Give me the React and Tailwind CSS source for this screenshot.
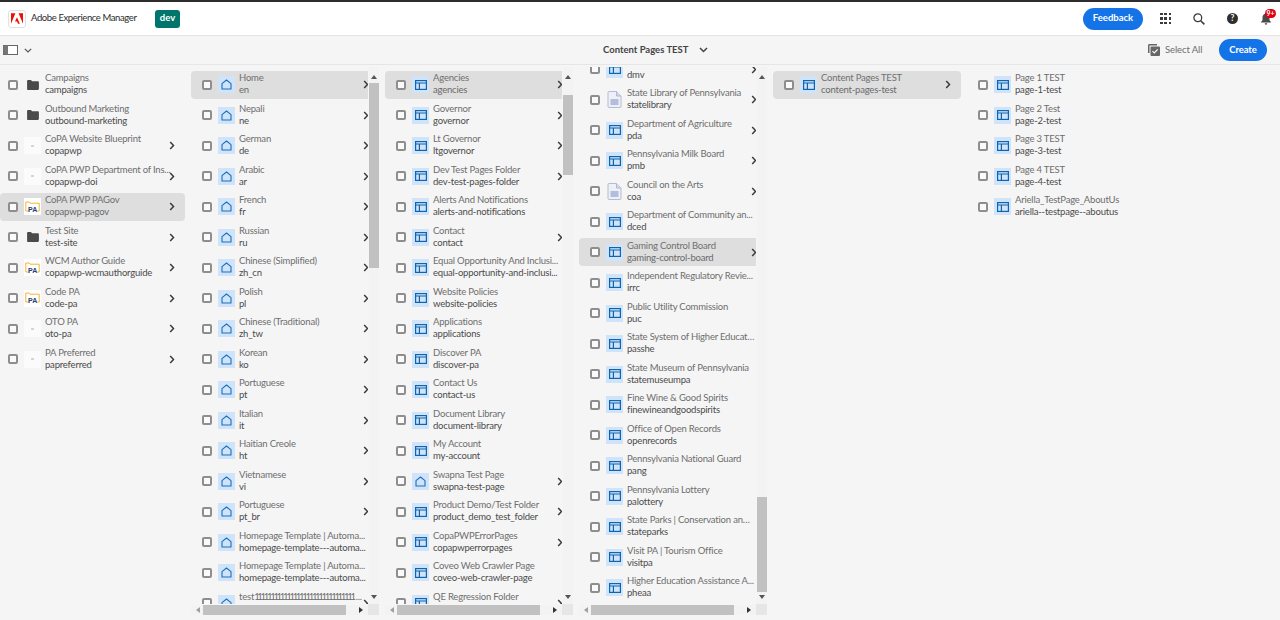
const col1 = [
  { t: 'Campaigns', s: 'campaigns', i: 'folder' },
  { t: 'Outbound Marketing', s: 'outbound-marketing', i: 'folder' },
  { t: 'CoPA Website Blueprint', s: 'copapwp', i: 'thumb', c: true },
  { t: 'CoPA PWP Department of Ins...', s: 'copapwp-doi', i: 'thumb', c: true },
  { t: 'CoPA PWP PAGov', s: 'copapwp-pagov', i: 'pa', c: true, sel: true },
  { t: 'Test Site', s: 'test-site', i: 'folder', c: true },
  { t: 'WCM Author Guide', s: 'copapwp-wcmauthorguide', i: 'pa', c: true },
  { t: 'Code PA', s: 'code-pa', i: 'pa', c: true },
  { t: 'OTO PA', s: 'oto-pa', i: 'thumb', c: true },
  { t: 'PA Preferred', s: 'papreferred', i: 'thumb', c: true },
]

const col2 = [
  { t: 'Home', s: 'en', sel: true },
  { t: 'Nepali', s: 'ne' },
  { t: 'German', s: 'de' },
  { t: 'Arabic', s: 'ar' },
  { t: 'French', s: 'fr' },
  { t: 'Russian', s: 'ru' },
  { t: 'Chinese (Simplified)', s: 'zh_cn' },
  { t: 'Polish', s: 'pl' },
  { t: 'Chinese (Traditional)', s: 'zh_tw' },
  { t: 'Korean', s: 'ko' },
  { t: 'Portuguese', s: 'pt' },
  { t: 'Italian', s: 'it' },
  { t: 'Haitian Creole', s: 'ht' },
  { t: 'Vietnamese', s: 'vi' },
  { t: 'Portuguese', s: 'pt_br' },
  { t: 'Homepage Template | Automa...', s: 'homepage-template---automa...', noC: true },
  { t: 'Homepage Template | Automa...', s: 'homepage-template---automa...', noC: true },
  { t: <>test<span className="tracking-[-2.3px]">1111111111111111111111111111111</span><span className="ml-[2px]">...</span></>, s: 'test' },
].map(r => ({ i: 'home', c: !r.noC, ...r }))

const col3 = [
  { t: 'Agencies', s: 'agencies', c: true, sel: true },
  { t: 'Governor', s: 'governor', c: true },
  { t: 'Lt Governor', s: 'ltgovernor', c: true },
  { t: 'Dev Test Pages Folder', s: 'dev-test-pages-folder', c: true },
  { t: 'Alerts And Notifications', s: 'alerts-and-notifications' },
  { t: 'Contact', s: 'contact', c: true },
  { t: 'Equal Opportunity And Inclusi...', s: 'equal-opportunity-and-inclusi...' },
  { t: 'Website Policies', s: 'website-policies' },
  { t: 'Applications', s: 'applications' },
  { t: 'Discover PA', s: 'discover-pa' },
  { t: 'Contact Us', s: 'contact-us' },
  { t: 'Document Library', s: 'document-library' },
  { t: 'My Account', s: 'my-account' },
  { t: 'Swapna Test Page', s: 'swapna-test-page', c: true, i: 'home' },
  { t: 'Product Demo/Test Folder', s: 'product_demo_test_folder', c: true },
  { t: 'CopaPWPErrorPages', s: 'copapwperrorpages', c: true },
  { t: 'Coveo Web Crawler Page', s: 'coveo-web-crawler-page' },
  { t: 'QE Regression Folder', s: 'qe-regression-folder', c: true },
].map(r => ({ i: 'page', ...r }))

const col4 = [
  { t: 'DMV', s: 'dmv', c: true },
  { t: 'State Library of Pennsylvania', s: 'statelibrary', c: true, i: 'file' },
  { t: 'Department of Agriculture', s: 'pda', c: true },
  { t: 'Pennsylvania Milk Board', s: 'pmb', c: true },
  { t: 'Council on the Arts', s: 'coa', c: true, i: 'file' },
  { t: 'Department of Community an...', s: 'dced' },
  { t: 'Gaming Control Board', s: 'gaming-control-board', c: true, sel: true },
  { t: 'Independent Regulatory Revie...', s: 'irrc' },
  { t: 'Public Utility Commission', s: 'puc' },
  { t: 'State System of Higher Educati...', s: 'passhe' },
  { t: 'State Museum of Pennsylvania', s: 'statemuseumpa' },
  { t: 'Fine Wine & Good Spirits', s: 'finewineandgoodspirits' },
  { t: 'Office of Open Records', s: 'openrecords' },
  { t: 'Pennsylvania National Guard', s: 'pang' },
  { t: 'Pennsylvania Lottery', s: 'palottery' },
  { t: 'State Parks | Conservation and ...', s: 'stateparks' },
  { t: 'Visit PA | Tourism Office', s: 'visitpa' },
  { t: 'Higher Education Assistance A...', s: 'pheaa' },
].map(r => ({ i: 'page', ...r }))

const col5 = [{ t: 'Content Pages TEST', s: 'content-pages-test', i: 'page', c: true, sel: true }]

const col6 = [
  { t: 'Page 1 TEST', s: 'page-1-test' },
  { t: 'Page 2 Test', s: 'page-2-test' },
  { t: 'Page 3 TEST', s: 'page-3-test' },
  { t: 'Page 4 TEST', s: 'page-4-test' },
  { t: 'Ariella_TestPage_AboutUs', s: 'ariella--testpage--aboutus' },
].map(r => ({ i: 'page', ...r }))

const RowIcon = ({ type }) => {
  if (type === 'folder') {
    return (
      <div className="w-[17px] h-[17px] shrink-0 flex items-center justify-center">
        <svg width="12" height="10" viewBox="0 0 13 11">
          <path d="M0 1.2C0 .5.5 0 1.2 0h3l1.3 1.5h6.3c.7 0 1.2.5 1.2 1.2v7c0 .7-.5 1.2-1.2 1.2H1.2C.5 11 0 10.5 0 9.8z" fill="#4a4a4a" />
        </svg>
      </div>
    )
  }
  if (type === 'thumb') {
    return (
      <div className="w-[17px] h-[17px] shrink-0 bg-[#fbfbfb] flex items-center justify-center">
        <div className="w-[3px] h-[2px] bg-[#d4d4d4]" />
      </div>
    )
  }
  if (type === 'pa') {
    return (
      <div className="w-[17px] h-[17px] shrink-0 bg-white flex items-center justify-center">
        <svg width="15" height="12" viewBox="0 0 15 12">
          <path d="M4.500 10H.8V1h3.200l1 1.200h9.200V10h-1.800" fill="none" stroke="#f5b335" strokeWidth="1" />
          <text x="7.700" y="10.800" textAnchor="middle" fontSize="7" fontWeight="700" fontFamily="Liberation Sans, sans-serif" fill="#1f3f77">PA</text>
        </svg>
      </div>
    )
  }
  if (type === 'file') {
    return (
      <div className="w-[17px] h-[17px] shrink-0 flex items-center justify-center">
        <svg width="15" height="17" viewBox="0 0 15 17">
          <path d="M1 1.500C1 1 1.400.5 2 .5h7.500L14 5v10.500c0 .6-.4 1-1 1H2c-.6 0-1-.4-1-1z" fill="#eef0f7" stroke="#a3aecb" strokeWidth=".8" />
          <path d="M9.500.5V5H14" fill="#d5dbea" stroke="#a3aecb" strokeWidth=".8" />
          <rect x="3.500" y="8" width="8" height="6" fill="#b4bedb" />
        </svg>
      </div>
    )
  }
  if (type === 'home') {
    return (
      <div className="w-[17px] h-[17px] shrink-0 bg-[#cfe4fb] flex items-center justify-center">
        <svg width="11" height="11" viewBox="0 0 11 11">
          <path d="M1 10V4.600L5.500 1 10 4.600V10z" fill="none" stroke="#1a6fb5" strokeWidth="1.1" strokeLinejoin="round" />
        </svg>
      </div>
    )
  }
  return (
    <div className="w-[17px] h-[17px] shrink-0 bg-[#cfe4fb] flex items-center justify-center">
      <svg width="12" height="10" viewBox="0 0 12 10">
        <rect x=".6" y=".6" width="10.800" height="8.800" fill="none" stroke="#0f65ad" strokeWidth="1.2" />
        <path d="M.6 3h10.800M4.400 3v6.400" fill="none" stroke="#0f65ad" strokeWidth="1.2" />
      </svg>
    </div>
  )
}

const Row = ({ item, first }) => (
  <div className={`flex items-center h-[27.5px] mb-[3px] rounded-[4px] shrink-0 ${first ? 'w-[185px] pl-[8px]' : 'w-[188px] pl-[11px]'} ${item.sel ? 'bg-[#dedede]' : ''}`}>
    <div className="w-[10px] h-[10px] shrink-0 mr-[6px] rounded-[2px] border-2 border-[#8e8e8e] bg-[#fafafa]" />
    <RowIcon type={item.i} />
    <div className="w-[128px] shrink-0 ml-[4px] mb-[1px] text-[9.5px] tracking-[-0.2px] leading-[12px]">
      <p className={`truncate ${item.sel ? 'text-[#707070]' : 'text-[#6e6e6e]'}`}>{item.t}</p>
      <p className={`truncate ${item.sel ? 'text-[#6a6a6a]' : 'text-[#4b4b4b]'}`}>{item.s}</p>
    </div>
    {item.c && (
      <svg className="-ml-[4px] shrink-0" width="6" height="9" viewBox="0 0 6 9">
        <path d="M1.200 1l3.300 3.500L1.200 8" fill="none" stroke="#3a3a3a" strokeWidth="1.5" />
      </svg>
    )}
  </div>
)

const Arrow = ({ dir, className = '' }) => {
  const d = { up: 'M0 4h6L3 0z', down: 'M0 0h6L3 4z', left: 'M4 0v6L0 3z', right: 'M0 0v6l4-3z' }[dir]
  const dark = dir === 'right' ? '#333333' : dir === 'left' ? '#a0a0a0' : '#555555'
  const vertical = dir === 'up' || dir === 'down'
  return (
    <svg className={`shrink-0 ${className}`} width={vertical ? 6 : 4} height={vertical ? 4 : 6} viewBox={vertical ? '0 0 6 4' : '0 0 4 6'}>
      <path d={d} fill={dark} />
    </svg>
  )
}

// column with fake classic scrollbars
const ScrollColumn = ({ items, thumb, innerClass = 'pt-[4px]' }) => (
  <div className="w-[188px] shrink-0 flex flex-col">
    <div className="flex h-[537px]">
      <div className="w-[177px] overflow-hidden">
        <div className={innerClass}>
          {items.map((item, i) => <Row key={i} item={item} />)}
        </div>
      </div>
      <div className="w-[10px] ml-px h-full flex flex-col items-center pt-[8px] pb-[5px] bg-[#f3f3f3]">
        <Arrow dir="up" />
        <div className={`w-full shrink-0 bg-[#c1c1c1] ${thumb}`} />
        <Arrow dir="down" className="mt-auto" />
      </div>
    </div>
    <div className="flex h-[11px]">
      <div className="w-[177px] h-[10px] mt-[1px] flex items-center bg-[#f3f3f3] pl-[5px]">
        <Arrow dir="left" />
        <div className="w-[143px] h-[10px] ml-[3px] bg-[#c1c1c1]" />
        <Arrow dir="right" className="ml-[13px]" />
      </div>
      <div className="w-[11px] h-[11px] bg-[#e6e6e6]" />
    </div>
  </div>
)

const App = () => {
  return (
    <div className="w-[1280px] h-[620px] overflow-hidden bg-[#f5f5f5] font-['Lato',sans-serif]">
      <div className="h-[2px] bg-[#2c2c2c]" />

      {/* top bar */}
      <header className="h-[34px] bg-white flex items-center pl-[8px] border-b border-[#e3e3e3]">
        <div className="w-[18px] h-[18px] flex items-center justify-center rounded-[3px] border border-[#e1e1e1] bg-white">
          <svg width="12" height="11" viewBox="0 0 30 26">
            <path d="M11 0H0v26zM19 0h11v26zM15 9.600L22 26h-4.600l-2.100-5.200H10z" fill="#eb1000" />
          </svg>
        </div>
        <span className="ml-[5px] w-[124px] text-[9.5px] tracking-[-0.4px] text-[#2c2c2c] whitespace-nowrap">Adobe Experience Manager</span>
        <span className="w-[25px] h-[18px] flex items-center justify-center rounded-[3px] bg-[#00756c] text-[9.5px] font-bold text-white">dev</span>
        <button className="ml-auto w-[60px] h-[22px] rounded-full bg-[#1473e6] text-[9.5px] font-bold text-white">Feedback</button>
        <div className="ml-[17px] grid grid-cols-3 gap-[2px] w-[11px]">
          {[...Array(9)].map((_, i) => <span key={i} className="w-[2.5px] h-[2.5px] bg-[#3a3a3a]" />)}
        </div>
        <svg className="ml-[22px]" width="12" height="12" viewBox="0 0 12 12">
          <circle cx="4.800" cy="4.800" r="3.900" fill="none" stroke="#3a3a3a" strokeWidth="1.3" />
          <path d="M7.700 7.700L11.400 11.400" stroke="#3a3a3a" strokeWidth="1.5" />
        </svg>
        <div className="ml-[22px] w-[11px] h-[11px] rounded-full bg-[#2f2f2f] flex items-center justify-center text-[8.5px] font-bold leading-none text-white">?</div>
        <div className="relative ml-[23px] mr-[9px] w-[10px] h-[12px]">
          <svg width="10" height="12" viewBox="0 0 10 12">
            <path d="M5 0c-.5 0-.8.3-.9.8C2.300 1.300 1.500 2.800 1.500 4.500v2.700L0 9v.6h10V9L8.500 7.200V4.500c0-1.700-.8-3.200-2.600-3.700C5.800.3 5.500 0 5 0zM3.700 10.200c.2.900.7 1.500 1.300 1.500s1.100-.6 1.300-1.500z" fill="#4a4a4a" />
          </svg>
          <span className="absolute -top-[4px] left-[4px] w-[11px] h-[9px] rounded-full bg-[#e1000f] text-[7px] leading-[9px] text-center font-bold text-white">9+</span>
        </div>
      </header>

      {/* action bar */}
      <div className="h-[29px] flex items-center border-b border-[#e6e6e6] pl-[3px] bg-[#f5f5f5]">
        <svg width="15" height="10" viewBox="0 0 15 10">
          <rect x=".5" y=".5" width="14" height="9" fill="#fff" stroke="#666" />
          <rect x=".5" y=".5" width="4.500" height="9" fill="#777" />
        </svg>
        <svg className="ml-[6px]" width="8" height="5" viewBox="0 0 8 5">
          <path d="M.8.8L4 4l3.200-3.200" fill="none" stroke="#555" strokeWidth="1.2" />
        </svg>
        <span className="ml-[571px] w-[86px] text-[9.5px] font-bold text-[#444] whitespace-nowrap">Content Pages TEST</span>
        <svg className="ml-[10px]" width="9" height="6" viewBox="0 0 9 6">
          <path d="M1 1l3.500 3.500L8 1" fill="none" stroke="#444" strokeWidth="1.5" />
        </svg>
        <svg className="ml-auto" width="12" height="12" viewBox="0 0 12 12">
          <path d="M0 1.500C0 .7.700 0 1.500 0H9v1.500H1.500V9H0z" fill="#666" />
          <rect x="2.500" y="2.500" width="9.500" height="9.500" rx="1" fill="#666" />
          <path d="M4.500 7.200l1.800 1.800 3.400-3.600" fill="none" stroke="#fff" strokeWidth="1.2" />
        </svg>
        <span className="ml-[5px] w-[37px] text-[9.5px] tracking-[-0.1px] text-[#6e6e6e] whitespace-nowrap">Select All</span>
        <button className="ml-[17px] mr-[13px] w-[48px] h-[22px] rounded-full bg-[#1473e6] text-[9.5px] tracking-[-0.1px] font-bold text-white">Create</button>
      </div>

      {/* miller columns */}
      <div className="flex gap-[6px] pt-[2px]">
        <div className="w-[185px] shrink-0 pt-[4px]">
          {col1.map((item, i) => <Row key={i} item={item} first />)}
        </div>
        <ScrollColumn items={col2} thumb="mt-[4px] h-[185px]" />
        <ScrollColumn items={col3} thumb="mt-[16px] h-[80px]" />
        <ScrollColumn items={col4} thumb="mt-[418px] h-[95px]" innerClass="-mt-[11.75px]" />
        <div className="w-[188px] shrink-0 pt-[4px]">
          {col5.map((item, i) => <Row key={i} item={item} />)}
        </div>
        <div className="w-[188px] shrink-0 pt-[4px]">
          {col6.map((item, i) => <Row key={i} item={item} />)}
        </div>
      </div>
    </div>
  )
}

export default App
